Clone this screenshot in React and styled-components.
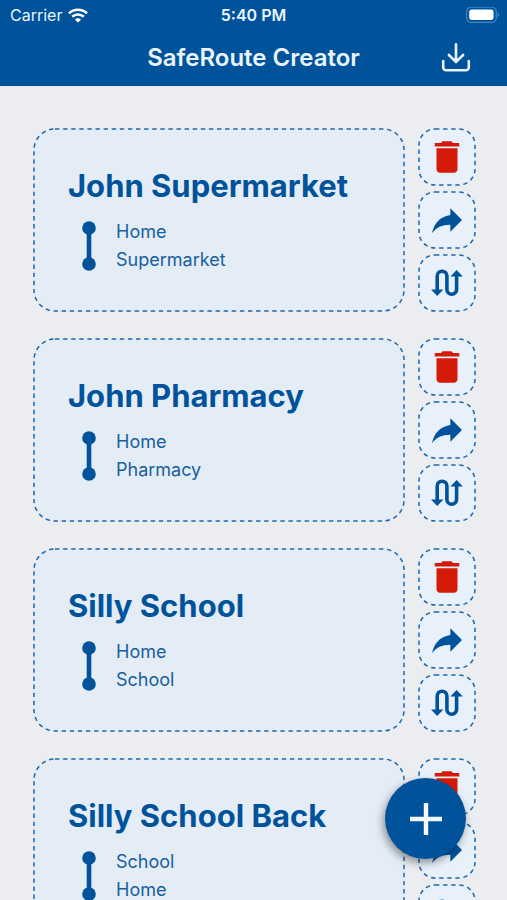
import React from "react";
import styled, { createGlobalStyle } from "styled-components";

const blue = "#00539b";

const GlobalStyle = createGlobalStyle`
  *, *::before, *::after { box-sizing: border-box; }
  body {
    margin: 0;
    background: #ecedf1;
    color: ${blue};
    font-family: Inter, "Liberation Sans", sans-serif;
  }
  button { font: inherit; color: inherit; padding: 0; cursor: pointer; }
`;

const Screen = styled.div`
  display: flex;
  flex-direction: column;
  height: 100vh;
  overflow: hidden;
`;

const TopBar = styled.header`
  flex: none;
  background: ${blue};
  color: #e9f4fd;
`;

const StatusBar = styled.div`
  display: grid;
  grid-template-columns: 1fr auto 1fr;
  align-items: center;
  height: 30px;
  padding: 0 7px;
  font-size: 16px;
  line-height: 20px;
`;

const Carrier = styled.div`
  display: flex;
  align-items: center;
  gap: 6px;
  padding-left: 3px;
`;

const Clock = styled.time`
  font-weight: 600;
`;

const BatterySlot = styled.div`
  display: flex;
  justify-content: flex-end;
`;

const TitleBar = styled.div`
  display: grid;
  grid-template-columns: 1fr auto 1fr;
  align-items: center;
  height: 56px;
  padding: 0 36px;
`;

const AppTitle = styled.h1`
  grid-column: 2;
  margin: 0;
  font-size: 24px;
  line-height: 30px;
  font-weight: 600;
`;

const DownloadButton = styled.button`
  justify-self: end;
  display: flex;
  border: 0;
  background: none;
`;

const RouteList = styled.ul`
  flex: 1;
  min-height: 0;
  margin: 0;
  padding: 42px 31px 42px 33px;
  list-style: none;
  overflow-y: auto;
  scrollbar-width: none;
  display: flex;
  flex-direction: column;
  gap: 26px;
`;

const RouteItem = styled.li`
  flex: none;
  display: flex;
  gap: 13px;
`;

const RouteCard = styled.article`
  position: relative;
  flex: 1;
  min-width: 0;
  padding: 39px 35px 38px;
  border-radius: 22px;
  background: #e4edf6;
`;

const RouteName = styled.h2`
  margin: 0 0 13px;
  font-size: 31px;
  line-height: 38px;
  font-weight: 700;
`;

const Journey = styled.div`
  display: flex;
  align-items: center;
  gap: 20px;
  padding-left: 14px;
`;

const Stops = styled.ol`
  margin: 0;
  padding: 0;
  list-style: none;
  font-size: 18px;
  line-height: 28px;
  color: #17609f;
`;

const Actions = styled.div`
  flex: none;
  display: flex;
  flex-direction: column;
  gap: 5px;
`;

const ActionButton = styled.button`
  position: relative;
  display: flex;
  align-items: center;
  justify-content: center;
  width: 58px;
  height: 58px;
  border: 0;
  border-radius: 17px;
  background: #e8f1fa;
  color: ${(p) => (p.$danger ? "#d51a07" : blue)};
`;

const DashedEdge = styled.svg`
  position: absolute;
  inset: 0;
  width: 100%;
  height: 100%;
  pointer-events: none;

  rect {
    x: 1px;
    y: 1px;
    width: calc(100% - 2px);
    height: calc(100% - 2px);
    fill: none;
    stroke: #1f68ab;
    stroke-width: 1.5px;
    stroke-dasharray: 4.4 3.7;
  }
`;

const AddButton = styled.button`
  position: fixed;
  right: 41px;
  bottom: 41px;
  display: flex;
  align-items: center;
  justify-content: center;
  width: 81px;
  height: 81px;
  border: 0;
  border-radius: 50%;
  background: ${blue};
  color: #f2f8fd;
  box-shadow: -2px 4px 8px rgba(0, 0, 0, 0.4);
`;

const Edge = ({ radius }) => (
  <DashedEdge aria-hidden="true">
    <rect rx={radius} />
  </DashedEdge>
);

const WifiIcon = () => (
  <svg width="20" height="15" viewBox="0 0 20 15" fill="none" stroke="#fff" strokeWidth="2.6" aria-hidden="true">
    <path d="M1 5.4a12.8 12.8 0 0 1 18 0" />
    <path d="M4.2 8.8a8.3 8.3 0 0 1 11.6 0" />
    <path d="M10 14.6 6.9 11.5a4.4 4.4 0 0 1 6.2 0z" fill="#fff" stroke="none" />
  </svg>
);

const BatteryIcon = () => (
  <svg width="34" height="17" viewBox="0 0 34 17" role="img" aria-label="Battery full">
    <rect x="0.7" y="0.2" width="29.6" height="15.2" rx="4.6" fill="none" stroke="#4187c2" strokeWidth="1.2" />
    <rect x="3.2" y="2.6" width="24.4" height="10.4" rx="2.4" fill="#fff" />
    <path d="M31.6 5.3c2.2.7 2.2 4.3 0 5z" fill="#4187c2" />
  </svg>
);

const DownloadIcon = () => (
  <svg width="30" height="30" viewBox="0 0 30 30" fill="none" stroke="currentColor" strokeWidth="2.6" strokeLinecap="round" strokeLinejoin="round" aria-hidden="true">
    <path d="M15 1.4v17.5M7.9 12l7.1 7 7.1-7" strokeLinejoin="miter" />
    <path d="M2.2 18v6.4a2.8 2.8 0 0 0 2.8 2.8h20a2.8 2.8 0 0 0 2.8-2.8V18" />
  </svg>
);

const JourneyIcon = () => (
  <svg width="14" height="50" viewBox="0 0 14 50" fill="currentColor" aria-hidden="true">
    <circle cx="7" cy="7" r="6.8" />
    <path d="M4.7 7h4.6v36H4.7z" />
    <circle cx="7" cy="43" r="6.8" />
  </svg>
);

const TrashIcon = () => (
  <svg width="42" height="42" viewBox="0 0 24 24" fill="currentColor" aria-hidden="true">
    <path d="M6 19c0 1.1.9 2 2 2h8c1.1 0 2-.9 2-2V7H6zM19 4h-3.5l-1-1h-5l-1 1H5v2h14z" />
  </svg>
);

const ShareIcon = () => (
  <svg width="40" height="40" viewBox="0 0 24 24" fill="currentColor" aria-hidden="true">
    <path d="M14 9V5l7 7-7 7v-4.1c-5 0-8.5 1.6-11 5.1 1-5 4-10 11-11z" />
  </svg>
);

const SwapIcon = () => (
  <svg width="32" height="28" viewBox="0 0 33 28" aria-hidden="true">
    <path d="M6.4 22V6.8a5 5 0 0 1 10 0v13.8a5 5 0 0 0 10 0V6" fill="none" stroke="currentColor" strokeWidth="3.7" />
    <path d="M0 20.8h12.8L6.4 27.4zM20 7.2h12.8L26.4.6z" fill="currentColor" />
  </svg>
);

const PlusIcon = () => (
  <svg width="32" height="32" viewBox="0 0 32 32" stroke="currentColor" strokeWidth="4.4" aria-hidden="true">
    <path d="M16 0v32M0 16h32" />
  </svg>
);

const routes = [
  { name: "John Supermarket", stops: ["Home", "Supermarket"] },
  { name: "John Pharmacy", stops: ["Home", "Pharmacy"] },
  { name: "Silly School", stops: ["Home", "School"] },
  { name: "Silly School Back", stops: ["School", "Home"] },
];

function Action({ label, danger, children }) {
  return (
    <ActionButton type="button" $danger={danger} aria-label={label}>
      <Edge radius="16" />
      {children}
    </ActionButton>
  );
}

function Route({ name, stops }) {
  return (
    <RouteItem>
      <RouteCard>
        <Edge radius="21" />
        <RouteName>{name}</RouteName>
        <Journey>
          <JourneyIcon />
          <Stops>
            {stops.map((stop) => (
              <li key={stop}>{stop}</li>
            ))}
          </Stops>
        </Journey>
      </RouteCard>
      <Actions>
        <Action danger label={`Delete ${name}`}>
          <TrashIcon />
        </Action>
        <Action label={`Share ${name}`}>
          <ShareIcon />
        </Action>
        <Action label={`Reverse ${name}`}>
          <SwapIcon />
        </Action>
      </Actions>
    </RouteItem>
  );
}

export default function App() {
  return (
    <Screen>
      <GlobalStyle />
      <TopBar>
        <StatusBar>
          <Carrier>
            Carrier
            <WifiIcon />
          </Carrier>
          <Clock>5:40 PM</Clock>
          <BatterySlot>
            <BatteryIcon />
          </BatterySlot>
        </StatusBar>
        <TitleBar>
          <AppTitle>SafeRoute Creator</AppTitle>
          <DownloadButton type="button" aria-label="Download routes">
            <DownloadIcon />
          </DownloadButton>
        </TitleBar>
      </TopBar>
      <RouteList>
        {routes.map((route) => (
          <Route key={route.name} {...route} />
        ))}
      </RouteList>
      <AddButton type="button" aria-label="Add route">
        <PlusIcon />
      </AddButton>
    </Screen>
  );
}
